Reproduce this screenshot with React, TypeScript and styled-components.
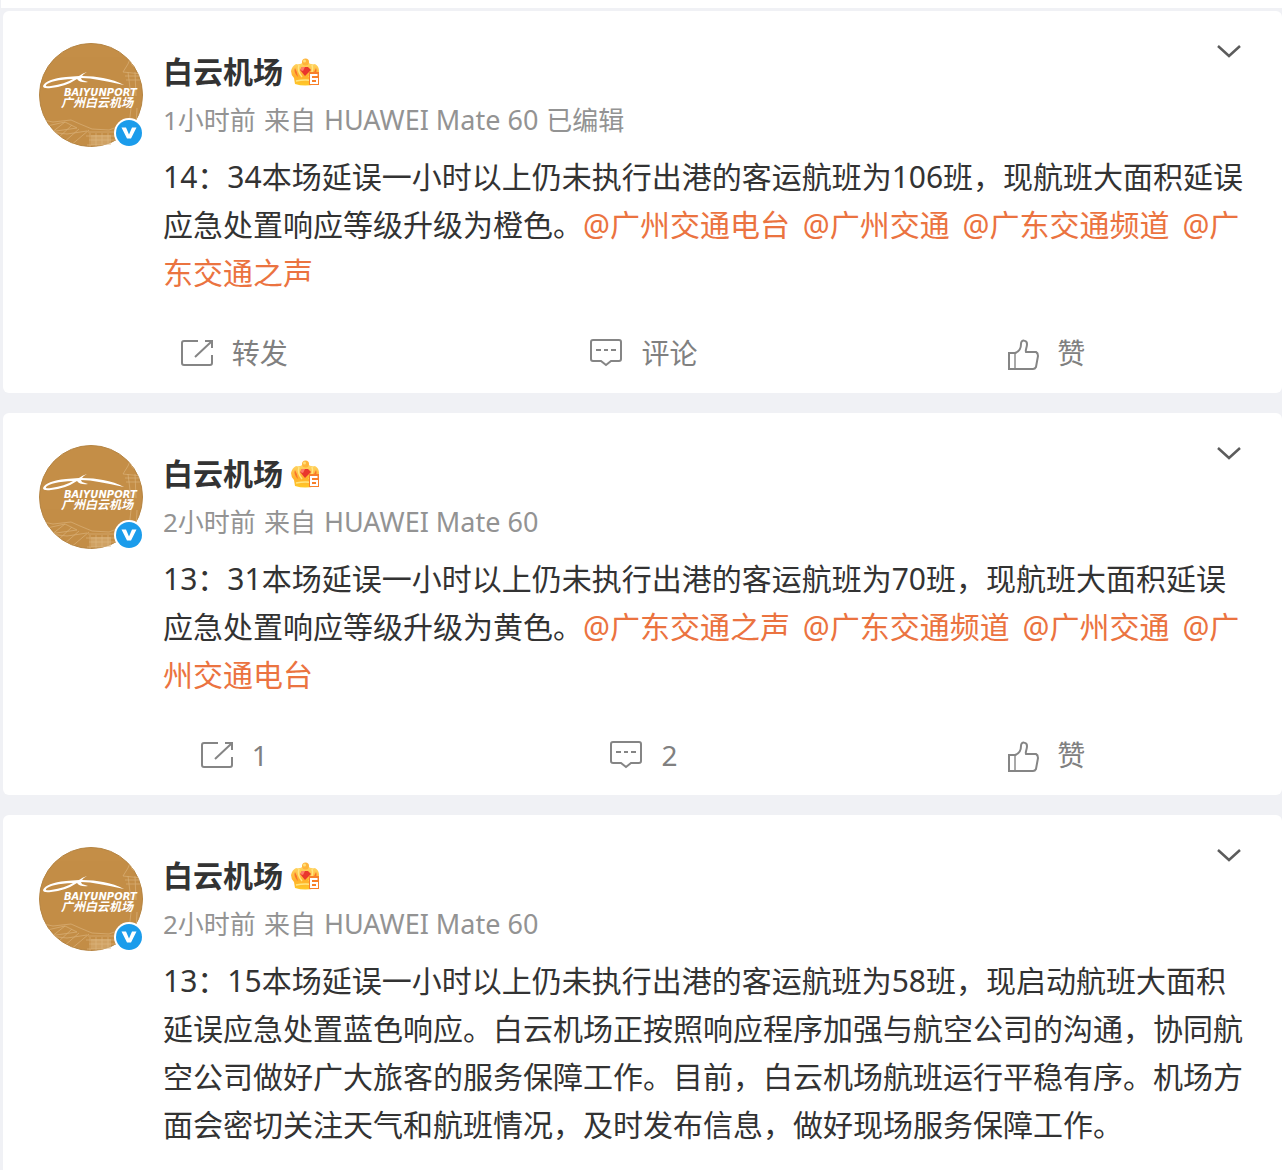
import React from "react";
import styled, { createGlobalStyle } from "styled-components";

const GlobalStyle = createGlobalStyle`
  * {
    box-sizing: border-box;
  }
  body {
    margin: 0;
    background: #f0f1f5;
    color: #333;
    font-family: "Noto Sans", "Noto Sans CJK SC", sans-serif;
  }
`;

const Page = styled.div`
  display: flex;
  flex-direction: column;
  min-height: 100vh;
`;

const PreviousCard = styled.div`
  height: 8px;
  margin-left: 1px;
  background: #fff;
`;

const Feed = styled.main`
  display: flex;
  flex: 1;
  flex-direction: column;
  gap: 20px;
  padding: 3px 0 0 3px;
`;

const Card = styled.article`
  padding: 32px 33px 19px 36px;
  background: #fff;
  border-radius: 6px;

  &:last-child {
    flex: 1;
    border-radius: 6px 6px 0 0;
  }
`;

const Header = styled.header`
  display: flex;
  gap: 20px;
  height: 104px;
`;

const AvatarLink = styled.a`
  position: relative;
  width: 104px;
  height: 104px;
  flex: none;
`;

const Verified = styled.svg`
  position: absolute;
  right: -1px;
  bottom: -1px;
`;

const Author = styled.div`
  flex: 1;
  padding-top: 7px;
`;

const NameRow = styled.div`
  display: flex;
  align-items: center;
  gap: 8px;
  height: 44px;
`;

const Name = styled.a`
  color: #333;
  font-size: 30px;
  font-weight: 700;
  line-height: 44px;
  text-decoration: none;
`;

const Meta = styled.div`
  display: flex;
  align-items: baseline;
  gap: 8px;
  height: 36px;
  margin-top: 8px;
  color: #939393;
  font-size: 26px;
  line-height: 36px;
`;

const Device = styled.span`
  font-size: 27px;
`;

const MenuButton = styled.button`
  display: flex;
  align-items: center;
  justify-content: center;
  width: 40px;
  height: 16px;
  padding: 0;
  border: 0;
  background: none;
  cursor: pointer;
`;

const Body = styled.p`
  margin: 6px 0 0 124px;
  font-size: 30px;
  line-height: 48px;
`;

const Mention = styled.a`
  margin-right: 5px;
  color: #eb7340;
  text-decoration: none;
`;

const Actions = styled.footer`
  display: grid;
  grid-template-columns: repeat(3, 1fr);
  margin: 35px -9px 0 -10px;
`;

const Action = styled.button<{ $like?: boolean }>`
  display: flex;
  align-items: center;
  justify-content: center;
  gap: ${(p) => (p.$like ? 16 : 18)}px;
  height: 42px;
  padding: 0 ${(p) => (p.$like ? 14 : 0)}px 0 0;
  border: 0;
  background: none;
  color: #808080;
  font-family: inherit;
  font-size: 28px;
  line-height: 42px;
  cursor: pointer;
`;

function Avatar() {
  return (
    <AvatarLink href="#profile" aria-label="白云机场">
      <svg width="104" height="104" viewBox="0 0 104 104">
        <defs>
          <clipPath id="disc">
            <circle cx="52" cy="52" r="52" />
          </clipPath>
        </defs>
        <circle cx="52" cy="52" r="51.5" fill="#c48e47" stroke="#b58544" />
        <g clipPath="url(#disc)" fill="none" stroke="#dcb57e" strokeWidth="0.8" opacity="0.8">
          <path d="M84 29l5-8 2-5 2 6 8 5M84 29l19 2M86 33h18M87 37h18M89 29l3 24M96 29l1 24M92 65l-2 18M98 65l-1 20M103 64v20" />
          <path d="M4 77l10 2 18-2 9 4 12 5 17 1 8-3 30 1M8 83l18-4 12 6-28 4M26 79l-14 11M33 82L18 96M40 86l-16 14M50 87L31 103M10 89l18 2 20-3M49 89h35M47 93h38M50 97h35M48 102h38M51 90v14M57 90v14M63 90v14M69 90v14" />
        </g>
        <path d="M52 92h20v10H52z" fill="#dfbd8a" opacity="0.45" />
        <path
          fill="#fff"
          fillRule="evenodd"
          d="M4 43Q7 36 27 34L40 33Q44 30 48 29Q44 31 43 33Q55 33 64 35Q76 37 85 42Q72 39 60 37Q51 35 42 35L43 37L49 39Q41 40 38 36Q26 44 12 45Q4 46 4 43zM7 42Q6 44 12 43Q26 41 34 36Q12 37 7 42z"
        />
        <text x="25" y="53" fill="#fff" fontFamily="DejaVu Sans, sans-serif" fontSize="10" fontWeight="700" fontStyle="italic">
          BAIYUNPORT
        </text>
        <text x="22" y="64" fill="#fff" fontFamily="Noto Sans CJK SC, sans-serif" fontSize="12" fontWeight="700" fontStyle="italic">
          广州白云机场
        </text>
      </svg>
      <Verified width="30" height="30" viewBox="0 0 30 30">
        <circle cx="15" cy="15" r="15" fill="#fff" />
        <circle cx="15" cy="15" r="13" fill="#1b9ceb" />
        <path d="M7.5 9.500H12l3 7 3-7h4.500L17 20.500h-4z" fill="#fff" />
      </Verified>
    </AvatarLink>
  );
}

function Crown() {
  return (
    <svg width="30" height="30" viewBox="0 0 30 30" role="img" aria-label="6">
      <defs>
        <linearGradient id="gold" x1="0" y1="0" x2="0" y2="1">
          <stop offset="0" stopColor="#ffd868" />
          <stop offset="0.6" stopColor="#ffb02c" />
          <stop offset="1" stopColor="#ffc928" />
        </linearGradient>
      </defs>
      <path d="M5 7Q10 8 12 5h5q2 3 7 2 4 2 4 7 0 4-3 7v6q-11 3-21 0l-1-6q-3-3-3-7 1-5 5-7z" fill="url(#gold)" />
      <path d="M4 11q-2 4 3 9-1-6-3-9zM25 11q2 4-3 9 1-6 3-9z" fill="#f8742b" />
      <path d="M8 8q-2 6 3 12M21 8q2 6-3 12M5 24q10-2 18 0" fill="none" stroke="#ffe682" strokeWidth="1.500" />
      <circle cx="14.500" cy="5" r="3.500" fill="#ffb43a" />
      <circle cx="13.500" cy="4" r="1.500" fill="#ffdf78" />
      <path d="M11 10h6l3 3-6 6-5-6z" fill="#e9362d" />
      <path d="M11 10h3l-2 4-3-1z" fill="#ff7b68" />
      <rect x="18" y="15" width="10" height="13" fill="#f8802a" />
      <path d="M26.500 18H20v8h6v-4h-5" fill="none" stroke="#fff" strokeWidth="2" />
    </svg>
  );
}

const iconProps = {
  width: 34,
  height: 34,
  viewBox: "0 0 34 34",
  fill: "none",
  stroke: "#858585",
  strokeWidth: 2,
  "aria-hidden": true,
} as const;

const RepostIcon = () => (
  <svg {...iconProps}>
    <path d="M18 5H4Q2 5 2 7v20q0 2 2 2h26q2 0 2-2v-8M15 21L31 6M25 5h7v7" />
  </svg>
);

const CommentIcon = () => (
  <svg {...iconProps}>
    <path d="M4 4h26q2 0 2 2v17q0 2-2 2h-8l-5 4-5-4H4q-2 0-2-2V6q0-2 2-2z" />
    <path d="M7 14h5M15 14h4M22 14h5" />
  </svg>
);

const LikeIcon = () => (
  <svg {...iconProps}>
    <path d="M2 17h6q6-2 6-9c0-5 6-4 6 0 0 4-2 6-1 8h10q2 1 2 4l-2 11q-1 2-3 2H2V17z" />
    <path d="M8 17v16" strokeWidth="1.400" />
  </svg>
);

type PostData = {
  time: string;
  edited?: boolean;
  text: string;
  mentions?: string[];
  reposts?: string;
  comments?: string;
};

const posts: PostData[] = [
  {
    time: "1小时前",
    edited: true,
    text: "14：34本场延误一小时以上仍未执行出港的客运航班为106班，现航班大面积延误应急处置响应等级升级为橙色。",
    mentions: ["@广州交通电台", "@广州交通", "@广东交通频道", "@广东交通之声"],
    reposts: "转发",
    comments: "评论",
  },
  {
    time: "2小时前",
    text: "13：31本场延误一小时以上仍未执行出港的客运航班为70班，现航班大面积延误应急处置响应等级升级为黄色。",
    mentions: ["@广东交通之声", "@广东交通频道", "@广州交通", "@广州交通电台"],
    reposts: "1",
    comments: "2",
  },
  {
    time: "2小时前",
    text: "13：15本场延误一小时以上仍未执行出港的客运航班为58班，现启动航班大面积延误应急处置蓝色响应。白云机场正按照响应程序加强与航空公司的沟通，协同航空公司做好广大旅客的服务保障工作。目前，白云机场航班运行平稳有序。机场方面会密切关注天气和航班情况，及时发布信息，做好现场服务保障工作。",
  },
];

function Post({ time, edited, text, mentions, reposts, comments }: PostData) {
  return (
    <Card>
      <Header>
        <Avatar />
        <Author>
          <NameRow>
            <Name href="#profile">白云机场</Name>
            <Crown />
          </NameRow>
          <Meta>
            <span>{time}</span>
            <span>来自</span>
            <Device>HUAWEI Mate 60</Device>
            {edited && <span>已编辑</span>}
          </Meta>
        </Author>
        <MenuButton aria-label="更多">
          <svg width="26" height="16" viewBox="0 0 26 16" fill="none" stroke="#5c5c5c" strokeWidth="2.500">
            <path d="M2 3l11 10L24 3" />
          </svg>
        </MenuButton>
      </Header>
      <Body>
        {text}
        {mentions?.map((m, i) => (
          <React.Fragment key={m}>
            {i > 0 && " "}
            <Mention href="#mention">{m}</Mention>
          </React.Fragment>
        ))}
      </Body>
      {reposts && (
        <Actions>
          <Action>
            <RepostIcon />
            {reposts}
          </Action>
          <Action>
            <CommentIcon />
            {comments}
          </Action>
          <Action $like>
            <LikeIcon />赞
          </Action>
        </Actions>
      )}
    </Card>
  );
}

export default function App() {
  return (
    <Page lang="zh-CN">
      <GlobalStyle />
      <PreviousCard />
      <Feed>
        {posts.map((p) => (
          <Post key={p.text} {...p} />
        ))}
      </Feed>
    </Page>
  );
}
